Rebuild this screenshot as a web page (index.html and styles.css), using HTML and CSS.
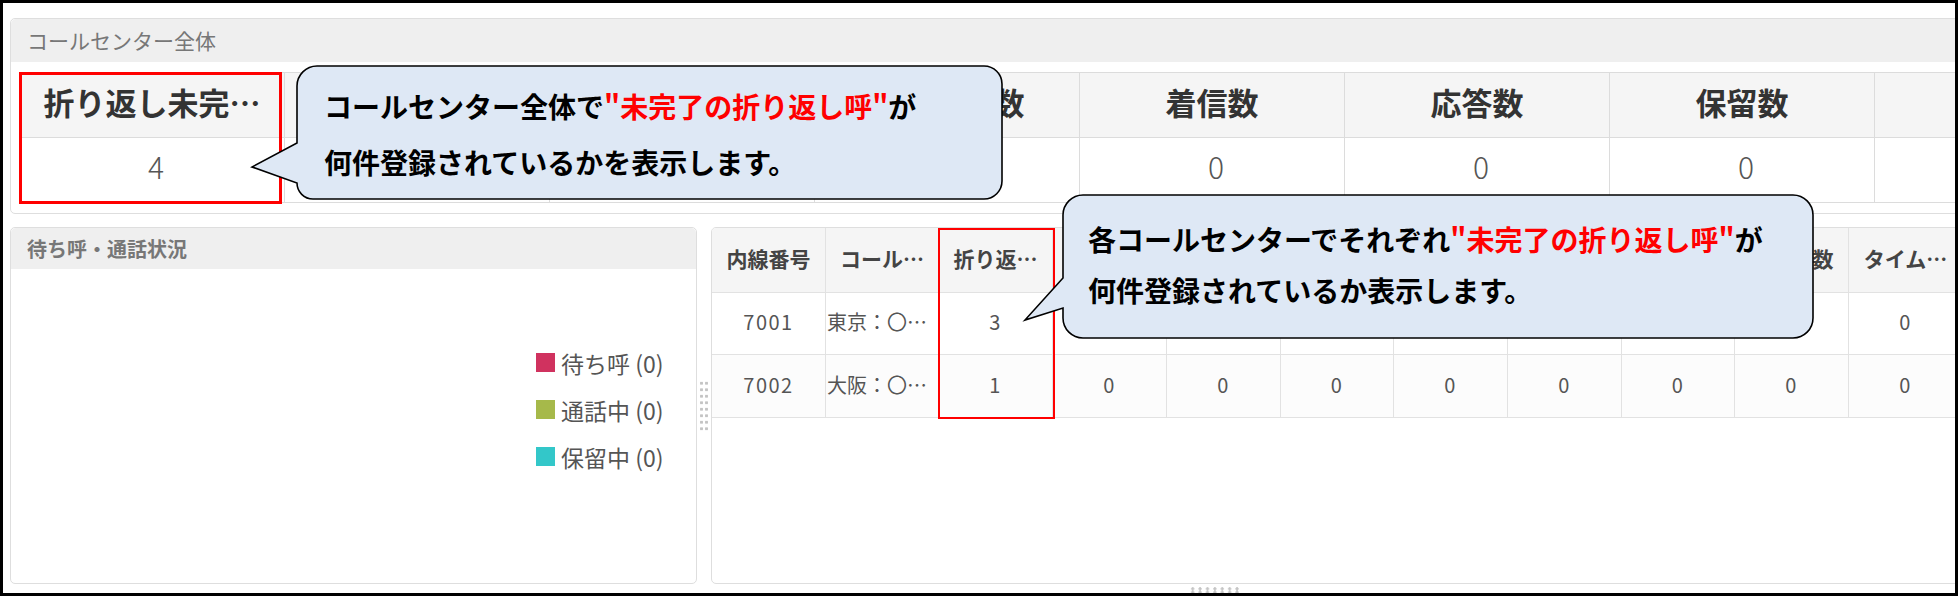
FILE: index.html
```html
<!DOCTYPE html>
<html lang="ja">
<head>
    <meta charset="UTF-8">
    <meta name="viewport" content="width=device-width, initial-scale=1.0">
    <title>コールセンター モニター</title>
    <link rel="stylesheet" href="styles.css">
</head>
<body>
    <div class="screen">
        <section class="panel panel-total">
            <div class="panel-head">コールセンター全体</div>
            <div class="panel-body">
                <div class="stats">
                    <div class="cell head">折り返し未完…</div>
                    <div class="cell head"></div>
                    <div class="cell head"></div>
                    <div class="cell head">総放棄呼数</div>
                    <div class="cell head">着信数</div>
                    <div class="cell head">応答数</div>
                    <div class="cell head">保留数</div>
                    <div class="cell head"></div>
                    <div class="cell">4</div>
                    <div class="cell"></div>
                    <div class="cell"></div>
                    <div class="cell"></div>
                    <div class="cell">0</div>
                    <div class="cell">0</div>
                    <div class="cell">0</div>
                    <div class="cell"></div>
                </div>
            </div>
        </section>

        <div class="lower">
            <section class="panel panel-status">
                <div class="panel-head bold">待ち呼・通話状況</div>
                <div class="legend">
                    <div class="legend-row"><span class="swatch waiting"></span>待ち呼 (0)</div>
                    <div class="legend-row"><span class="swatch talking"></span>通話中 (0)</div>
                    <div class="legend-row"><span class="swatch holding"></span>保留中 (0)</div>
                </div>
            </section>

            <div class="splitter"><div class="grip-v"></div></div>

            <section class="panel panel-agents">
                <div class="agents">
                    <div class="cell head">内線番号</div>
                    <div class="cell head">コール…</div>
                    <div class="cell head">折り返…</div>
                    <div class="cell head"></div>
                    <div class="cell head"></div>
                    <div class="cell head"></div>
                    <div class="cell head"></div>
                    <div class="cell head"></div>
                    <div class="cell head"></div>
                    <div class="cell head">放棄呼数</div>
                    <div class="cell head">タイム…</div>

                    <div class="cell num">7001</div>
                    <div class="cell name">東京：〇…</div>
                    <div class="cell num">3</div>
                    <div class="cell"></div>
                    <div class="cell"></div>
                    <div class="cell"></div>
                    <div class="cell"></div>
                    <div class="cell"></div>
                    <div class="cell"></div>
                    <div class="cell"></div>
                    <div class="cell num">0</div>

                    <div class="cell tall num">7002</div>
                    <div class="cell tall name">大阪：〇…</div>
                    <div class="cell tall num">1</div>
                    <div class="cell tall num">0</div>
                    <div class="cell tall num">0</div>
                    <div class="cell tall num">0</div>
                    <div class="cell tall num">0</div>
                    <div class="cell tall num">0</div>
                    <div class="cell tall num">0</div>
                    <div class="cell tall num">0</div>
                    <div class="cell tall num">0</div>
                </div>
            </section>
        </div>

        <div class="grip-h"></div>

        <!-- annotations -->
        <div class="mark mark-total"></div>
        <div class="mark mark-agents"></div>

        <svg class="bubble bubble-total" width="756" height="138" viewBox="0 0 756 138">
            <path d="M 67 2 H 734 A 18 18 0 0 1 752 20 V 117 A 18 18 0 0 1 734 135 H 63 A 16 16 0 0 1 47 119 L 2 103 L 47 79 V 22 A 20 20 0 0 1 67 2 Z" />
        </svg>
        <div class="bubble-text text-total">
            コールセンター全体で<em>"未完了の折り返し呼"</em>が<br>
            何件登録されているかを表示します。
        </div>

        <svg class="bubble bubble-agents" width="794" height="148" viewBox="0 0 794 148">
            <path d="M 61 2 H 771 A 20 20 0 0 1 791 22 V 125 A 20 20 0 0 1 771 145 H 61 A 20 20 0 0 1 41 125 V 115 L 3 127 L 41 85 V 22 A 20 20 0 0 1 61 2 Z" />
        </svg>
        <div class="bubble-text text-agents">
            各コールセンターでそれぞれ<em>"未完了の折り返し呼"</em>が<br>
            何件登録されているか表示します。
        </div>
    </div>
</body>
</html>
```

FILE: styles.css
```css
html, body {
    margin: 0;
    padding: 0;
}
body {
    font-family: "Noto Sans CJK JP", "Noto Sans", sans-serif;
    background: #fff;
}
.screen {
    position: relative;
    width: 1958px;
    height: 596px;
    box-sizing: border-box;
    border: 3px solid #000;
    padding: 15px 0 0 7px;
    overflow: hidden;
    background: #fff;
}
.panel {
    border: 1px solid #dedede;
    border-radius: 5px;
    background: #fff;
    box-sizing: border-box;
}
.panel-head {
    height: 43px;
    background: #efefef;
    color: #777;
    font-size: 21px;
    line-height: 43px;
    padding-left: 16px;
    border-radius: 5px 5px 0 0;
}
.panel-head.bold {
    font-weight: 700;
    font-size: 20px;
    height: 41px;
    line-height: 41px;
}

/* top summary */
.panel-total {
    width: 1990px;
}
.panel-total .panel-body {
    padding: 10px 0 10px 8px;
}
.stats {
    display: grid;
    grid-template-columns: repeat(8, 265px);
    border-top: 1px solid #dcdcdc;
    border-left: 1px solid #dcdcdc;
}
.stats .cell {
    height: 65px;
    box-sizing: border-box;
    border-right: 1px solid #dcdcdc;
    border-bottom: 1px solid #dcdcdc;
    display: flex;
    align-items: center;
    justify-content: center;
    padding: 0 0 8px 8px;
    font-size: 30px;
    font-weight: 300;
    color: #555;
}
.stats .cell.head {
    background: #f5f5f5;
    font-weight: 700;
    color: #333;
    font-size: 31px;
    padding: 0 0 7px 0;
}

/* lower row */
.lower {
    display: flex;
    height: 357px;
    margin-top: 13px;
}
.panel-status {
    width: 687px;
    flex-shrink: 0;
}
.legend {
    padding: 70px 0 0 525px;
}
.legend-row {
    display: flex;
    align-items: center;
    height: 47px;
    font-size: 23px;
    color: #555;
    white-space: nowrap;
}
.swatch {
    width: 19px;
    height: 19px;
    margin-right: 6px;
    flex-shrink: 0;
}
.swatch.waiting { background: #d0325f; }
.swatch.talking { background: #a6b94a; }
.swatch.holding { background: #33c7c9; }

.splitter {
    width: 14px;
    flex-shrink: 0;
    display: flex;
    align-items: center;
    justify-content: center;
}
.grip-v {
    width: 10px;
    height: 52px;
    background-image: radial-gradient(circle, #c4c4c4 1.3px, transparent 1.8px);
    background-size: 5px 6.5px;
}
.grip-h {
    width: 53px;
    height: 7px;
    margin: 3px 0 0 1179px;
    background-image: radial-gradient(circle, #c4c4c4 1.3px, transparent 1.8px);
    background-size: 7.4px 3.5px;
}

/* agent table */
.panel-agents {
    flex-shrink: 0;
    width: 1300px;
    border-radius: 5px 0 0 5px;
    overflow: hidden;
}
.agents {
    display: grid;
    grid-template-columns: 114px 113px 114px 114px 114px 113px 114px 114px 113px 114px 114px;
}
.agents .cell {
    height: 62px;
    box-sizing: border-box;
    border-right: 1px solid #e2e2e2;
    border-bottom: 1px solid #e2e2e2;
    display: flex;
    align-items: center;
    justify-content: center;
    padding-bottom: 4px;
    font-size: 20px;
    color: #555;
    white-space: nowrap;
    overflow: hidden;
}
.agents .cell.num {
    letter-spacing: 1.5px;
}
.agents .cell.head {
    height: 65px;
    background: #f5f5f5;
    font-weight: 700;
    color: #444;
    font-size: 21px;
}
.agents .cell.tall {
    height: 63px;
    background: #fcfcfc;
}
.agents .cell.name {
    justify-content: flex-start;
    padding-left: 1px;
}

/* annotations over the screenshot */
.mark {
    position: absolute;
    box-sizing: border-box;
    border: 3px solid #f00;
}
.mark-total {
    left: 16px;
    top: 69px;
    width: 263px;
    height: 132px;
}
.mark-agents {
    left: 935px;
    top: 225px;
    width: 117px;
    height: 191px;
    border-width: 2.5px;
}
.bubble {
    position: absolute;
    overflow: visible;
}
.bubble path {
    fill: #dee8f5;
    stroke: #000;
    stroke-width: 1.6;
}
.bubble-total {
    left: 247px;
    top: 61px;
}
.bubble-agents {
    left: 1019px;
    top: 190px;
}
.bubble-text {
    position: absolute;
    font-size: 28px;
    font-weight: 700;
    color: #000;
    white-space: nowrap;
}
.bubble-text em {
    font-style: normal;
    color: #f00;
}
.text-total {
    left: 321px;
    top: 75px;
    line-height: 56px;
}
.text-agents {
    left: 1085px;
    top: 211px;
    line-height: 51px;
}
```
